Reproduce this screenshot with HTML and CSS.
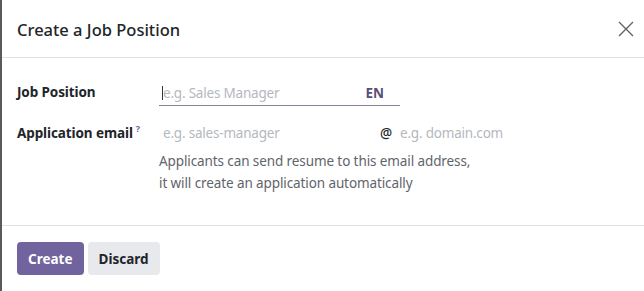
FILE: index.html
```html
<!DOCTYPE html>
<html lang="en">
<head>
  <meta charset="UTF-8">
  <title>Create a Job Position</title>
  <link rel="stylesheet" href="styles.css">
</head>
<body>
  <div class="dialog">
    <div class="dialog-header">
      <h4 class="dialog-title">Create a Job Position</h4>
      <button class="btn-close" aria-label="Close">
        <svg width="16" height="16" viewBox="0 0 16 16">
          <path d="M1 1 L15 15 M15 1 L1 15" stroke="#5f636a" stroke-width="1.4" fill="none"/>
        </svg>
      </button>
    </div>

    <div class="dialog-body">
      <div class="field-row">
        <label class="field-label">Job Position</label>
        <div class="field-input focused">
          <span class="caret"></span>
          <span class="placeholder">e.g. Sales Manager</span>
          <span class="lang">EN</span>
        </div>
      </div>

      <div class="field-row">
        <label class="field-label">Application email<sup class="help">?</sup></label>
        <div class="field-value">
          <div class="email-inputs">
            <span class="placeholder alias-name">e.g. sales-manager</span>
            <span class="at">@</span>
            <span class="placeholder">e.g. domain.com</span>
          </div>
          <p class="help-text">Applicants can send resume to this email address,<br>it will create an application automatically</p>
        </div>
      </div>
    </div>

    <div class="dialog-footer">
      <button class="btn btn-primary">Create</button>
      <button class="btn btn-secondary">Discard</button>
    </div>
  </div>
</body>
</html>
```

FILE: styles.css
```css
:root {
  --text-color: #212529;
  --muted-color: #5f646b;
  --placeholder-color: #b4b8be;
  --primary-color: #71639e;
  --border-color: #dee2e6;
}

* {
  margin: 0;
  padding: 0;
  box-sizing: border-box;
}

body {
  font-family: 'Noto Sans', 'Open Sans', sans-serif;
  background-color: #ffffff;
  color: var(--text-color);
  font-size: 13.5px;
}

.dialog {
  width: 644px;
  height: 291px;
  border-left: 2px solid #5a5a5a;
  display: flex;
  flex-direction: column;
}

.dialog-header {
  height: 58px;
  display: flex;
  align-items: center;
  justify-content: space-between;
  padding: 0 9px 0 15px;
  border-bottom: 1px solid var(--border-color);
}

.dialog-title {
  font-size: 16.5px;
  font-weight: 500;
  margin-top: 1px;
}

.btn-close {
  background: none;
  border: none;
  width: 18px;
  height: 18px;
  display: flex;
  align-items: center;
  justify-content: center;
  cursor: pointer;
}

.dialog-body {
  height: 168px;
  padding: 22px 15px 0 15px;
  border-bottom: 1px solid var(--border-color);
}

.field-row {
  display: flex;
  margin-bottom: 15px;
}

.field-label {
  width: 142px;
  font-weight: 700;
  line-height: 24px;
  letter-spacing: -0.1px;
}

.help {
  color: var(--primary-color);
  font-size: 9px;
  margin-left: 3px;
  vertical-align: top;
  position: relative;
  top: -4px;
}

.field-input {
  width: 241px;
  height: 26px;
  display: flex;
  align-items: center;
  padding-left: 3px;
  border-bottom: 1px solid #8a8096;
}

.caret {
  width: 1px;
  height: 14px;
  background-color: #333;
}

.placeholder {
  color: var(--placeholder-color);
  letter-spacing: -0.2px;
}

.lang {
  margin-left: auto;
  margin-right: 16px;
  font-weight: 700;
  color: #5b4e72;
}

.field-value {
  display: flex;
  flex-direction: column;
}

.email-inputs {
  display: flex;
  align-items: center;
  height: 24px;
  padding-left: 4px;
}

.alias-name {
  width: 217px;
}

.at {
  width: 20px;
  font-weight: 500;
  color: var(--text-color);
}

.help-text {
  color: var(--muted-color);
  line-height: 22px;
  margin-top: 5px;
  letter-spacing: -0.1px;
}

.dialog-footer {
  display: flex;
  gap: 4px;
  padding: 16px 15px;
}

.btn {
  height: 33px;
  border: none;
  border-radius: 4px;
  font-family: inherit;
  font-size: 13.5px;
  font-weight: 700;
  padding: 0 11px;
  cursor: pointer;
}

.btn-primary {
  background-color: var(--primary-color);
  color: #ffffff;
}

.btn-secondary {
  background-color: #e7e9ed;
  color: #1f2429;
}
```
